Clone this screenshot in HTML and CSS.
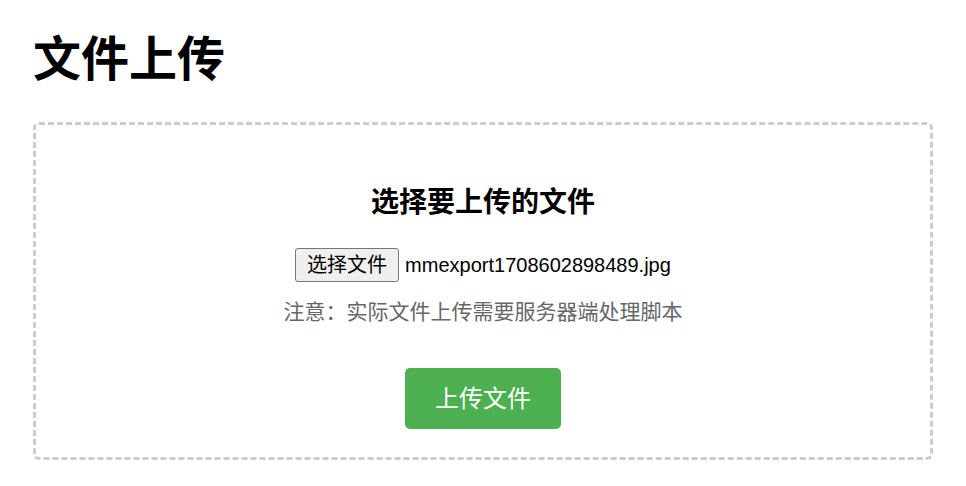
FILE: index.html
```html
<!DOCTYPE html>
<html lang="zh-CN">
<head>
  <meta charset="UTF-8">
  <meta name="viewport" content="width=device-width, initial-scale=1.0">
  <title>文件上传</title>
  <link rel="stylesheet" href="styles.css">
</head>
<body>
  <div class="page">
    <h1>文件上传</h1>

    <form class="upload-box">
      <h2>选择要上传的文件</h2>
      <div class="file-row">
        <span class="file-btn">选择文件</span>
        <span class="file-name">mmexport1708602898489.jpg</span>
      </div>
      <p class="note">注意：实际文件上传需要服务器端处理脚本</p>
      <button type="button" class="upload-btn">上传文件</button>
    </form>
  </div>
</body>
</html>
```

FILE: styles.css
```css
* {
  box-sizing: border-box;
}

body {
  margin: 0;
  font-family: "Liberation Sans", "Noto Sans CJK SC", sans-serif;
  color: #000;
  background: #fff;
}

.page {
  width: 900px;
  margin: 0 auto;
}

h1 {
  margin: 31px 0 33px;
  font-size: 48px;
  line-height: 58px;
  font-weight: 700;
}

.upload-box {
  border: 3px dashed #ccc;
  border-radius: 6px;
  padding: 61px 20px 28px;
  text-align: center;
}

h2 {
  margin: 0 0 28px;
  font-size: 28px;
  line-height: 34px;
  font-weight: 700;
}

.file-row {
  display: flex;
  justify-content: center;
  align-items: center;
  gap: 6px;
  font-size: 20px;
}

.file-btn {
  display: inline-block;
  padding: 4px 11px;
  line-height: 24px;
  background: #efefef;
  border: 1px solid #767676;
  border-radius: 3px;
}

.file-name {
  line-height: 24px;
}

.note {
  margin: 18px 0 44px;
  font-size: 21px;
  line-height: 24px;
  color: #666;
}

.upload-btn {
  padding: 16px 30px;
  border: none;
  border-radius: 5px;
  background-color: #4caf50;
  color: #fff;
  font-family: inherit;
  font-size: 24px;
  line-height: 29px;
  cursor: pointer;
}
```
